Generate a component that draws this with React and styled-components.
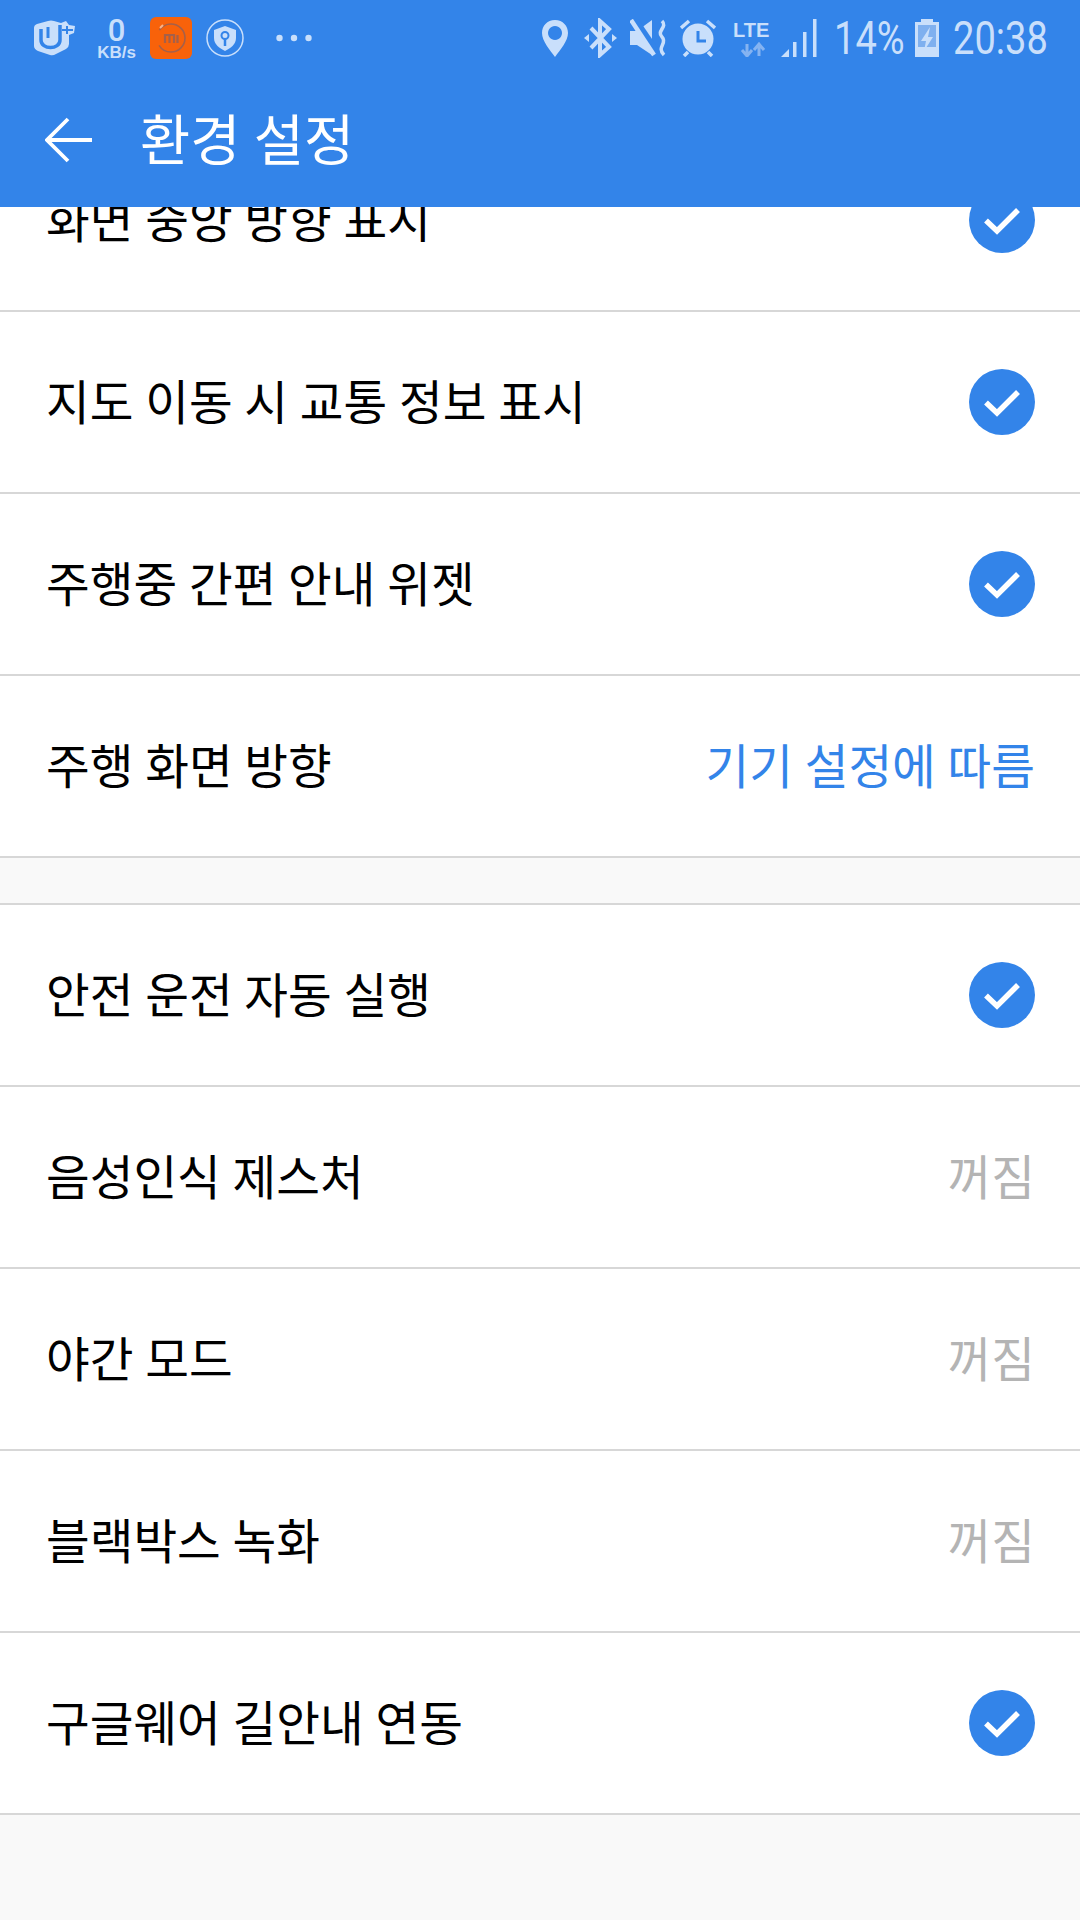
import React from 'react';
import styled, { createGlobalStyle } from 'styled-components';

const BLUE = '#3384e9';
const TINT = '#c9dffb';
const FONT = `Roboto, "Noto Sans CJK KR", sans-serif`;

const GlobalStyle = createGlobalStyle`
  html, body {
    margin: 0;
    padding: 0;
    background: #f9f9f9;
  }
`;

const Screen = styled.div`
  width: 1080px;
  height: 1920px;
  overflow: hidden;
  display: flex;
  flex-direction: column;
  background: #f9f9f9;
  font-family: ${FONT};
`;

const Header = styled.header`
  flex: none;
  height: 207px;
  background: ${BLUE};
  position: relative;
  z-index: 1;
`;

const StatusBar = styled.div`
  height: 76px;
  padding: 0 32px 0 33px;
  display: flex;
  align-items: center;
  justify-content: space-between;
  color: ${TINT};
`;

const StatusGroup = styled.div`
  display: flex;
  align-items: center;
`;

const Speed = styled.div`
  width: 41px;
  margin: 0 0 0 21px;
  display: flex;
  flex-direction: column;
  align-items: center;
  font-family: "Liberation Sans", sans-serif;
  font-weight: 700;
  font-size: 17px;
  line-height: 15px;
  white-space: nowrap;
  & > b {
    font-family: Roboto, sans-serif;
    font-weight: 500;
    font-size: 31px;
    line-height: 28px;
  }
`;

const StatusText = styled.span`
  display: block;
  width: ${(p) => p.$w}px;
  margin-left: ${(p) => p.$m}px;
  font-family: Roboto, sans-serif;
  font-size: 47px;
  line-height: 46px;
  white-space: nowrap;
  transform: scaleX(0.81);
  transform-origin: left center;
`;

const TitleBar = styled.div`
  height: 131px;
  padding: 0 0 3px 45px;
  box-sizing: border-box;
  display: flex;
  align-items: center;
  color: #fff;
`;

const Title = styled.h1`
  margin: 0 0 8px 48px;
  font-size: 54.5px;
  font-weight: 400;
`;

const List = styled.main`
  margin-top: -77px;
`;

const Group = styled.section`
  background: #fff;
  border-top: ${(p) => (p.$ruled ? '2px solid #d7d7d7' : 'none')};
  margin-bottom: 45px;
`;

const Row = styled.div`
  height: 180px;
  padding: 0 45px 0 46px;
  display: flex;
  align-items: center;
  justify-content: space-between;
  border-bottom: 2px solid #d7d7d7;
`;

const Label = styled.span`
  font-size: 47.5px;
  color: #000;
  margin-bottom: 5px;
`;

const Value = styled.span`
  font-size: 47.5px;
  color: ${(p) => (p.$on ? '#3384e9' : '#b4b4b4')};
  margin-bottom: 5px;
`;

const Icon = styled.svg`
  flex: none;
  display: block;
  margin: ${(p) => p.$m || '0'};
`;

const Check = () => (
  <svg width="66" height="66" viewBox="0 0 66 66">
    <circle cx="33" cy="33" r="33" fill={BLUE} />
    <path d="M17 33.5 L28 44 L49 23" fill="none" stroke="#fff" strokeWidth="5.5" />
  </svg>
);

const Uplus = () => (
  <Icon width="42" height="36" viewBox="0 0 42 36">
    <path d="M1 8 Q1 5 4 4 L15 1 Q18 0 21 1 L28 3 L33 1 L36 5 L42 6 L41 13 L36 15 V24 Q36 27 33 29 L23 34 Q20 36 17 35 L5 31 Q1 29 1 26 Z" fill={TINT} />
    <path d="M8 9 V20 C8 30 27 30 27 20 V5" fill="none" stroke={BLUE} strokeWidth="3.5" />
    <path d="M15 7 V18" stroke={BLUE} strokeWidth="3" />
    <path d="M34 6 V14 M29 10 H40" stroke={BLUE} strokeWidth="2" />
  </Icon>
);

const MiBadge = () => (
  <Icon width="42" height="42" viewBox="0 0 42 42" $m="0 0 0 13px">
    <rect width="42" height="42" rx="6" fill="#f8620a" />
    <circle cx="21" cy="21" r="14" fill="none" stroke="#a5604a" strokeWidth="1.6" strokeDasharray="72 16" strokeDashoffset="-52" />
    <path d="M10 11 L13 8" stroke="#fbb48a" strokeWidth="2" />
    <path d="M15 26 V18 H24 V26 M19.5 18 V26 M27.5 18 V26" fill="none" stroke="#a5604a" strokeWidth="2.2" />
  </Icon>
);

const Shield = () => (
  <Icon width="38" height="38" viewBox="0 0 38 38" $m="0 0 0 14px">
    <circle cx="19" cy="19" r="18" fill="none" stroke={TINT} strokeWidth="1.5" />
    <path d="M19 7 L30 11 V19 C30 25 25 29 19 32 C13 29 8 25 8 19 V11 Z" fill={TINT} />
    <circle cx="19" cy="16.5" r="3.5" fill="none" stroke={BLUE} strokeWidth="2" />
    <path d="M19 20 V27" stroke={BLUE} strokeWidth="2.5" />
  </Icon>
);

const Dots = () => (
  <Icon width="36" height="8" viewBox="0 0 36 8" $m="0 0 0 32px">
    <circle cx="3.5" cy="4" r="3.2" fill={TINT} />
    <circle cx="18" cy="4" r="3.2" fill={TINT} />
    <circle cx="32.5" cy="4" r="3.2" fill={TINT} />
  </Icon>
);

const Pin = () => (
  <Icon width="26" height="37" viewBox="0 0 26 37">
    <path fillRule="evenodd" d="M13 0 C21 0 26 6 26 13 C26 21 18 30 13 37 C8 30 0 21 0 13 C0 6 5 0 13 0 Z M13 6 A7 7 0 1 0 13.01 6 Z" fill={TINT} />
  </Icon>
);

const Bluetooth = () => (
  <Icon width="33" height="40" viewBox="0 0 33 40" $m="0 0 0 16px">
    <path d="M7 10 L25 29 L16 37 V3 L25 11 L7 30" fill="none" stroke={TINT} strokeWidth="4" />
    <path d="M0 20 L5 16 V24 Z M33 20 L28 16 V24 Z" fill={TINT} />
  </Icon>
);

const Mute = () => (
  <Icon width="38" height="38" viewBox="0 0 38 38" $m="0 0 0 13px">
    <path d="M0 12 H7 L22 1 V36 L7 26 H0 Z" fill={TINT} />
    <path d="M3 -1 L26 33" stroke={BLUE} strokeWidth="8" />
    <path d="M1 1 L24 36" stroke={TINT} strokeWidth="4.5" />
    <path d="M32 2 C38 8 26 12 32 18 C38 24 26 28 34 36" fill="none" stroke={TINT} strokeWidth="3.5" />
  </Icon>
);

const Alarm = () => (
  <Icon width="36" height="38" viewBox="0 0 36 38" $m="0 0 0 12px">
    <circle cx="18" cy="20" r="15.5" fill={TINT} />
    <path d="M18 12 V22 H26" fill="none" stroke={BLUE} strokeWidth="3" />
    <path d="M1 9 L9 2 M35 9 L27 2 M4 37 L8 33 M32 37 L28 33" stroke={TINT} strokeWidth="3.5" />
  </Icon>
);

const Lte = () => (
  <Icon width="38" height="38" viewBox="0 0 38 38" $m="0 0 0 17px">
    <text x="0" y="18" fontFamily="Liberation Sans, sans-serif" fontWeight="700" fontSize="20" fill={TINT}>LTE</text>
    <path d="M14 25 V35 M9 31 L14 37 L19 31" fill="none" stroke="#85b3f1" strokeWidth="3" />
    <path d="M26 37 V27 M21 31 L26 25 L31 31" fill="none" stroke="#85b3f1" strokeWidth="3" />
  </Icon>
);

const Signal = () => (
  <Icon width="36" height="38" viewBox="0 0 36 38" $m="0 0 0 10px">
    <path d="M0 38 L8 30 V38 Z" fill={TINT} />
    <rect x="12" y="23" width="3.5" height="15" fill={TINT} />
    <rect x="22" y="13" width="3.5" height="25" fill={TINT} />
    <rect x="32" y="0" width="3.5" height="38" fill={TINT} />
  </Icon>
);

const Battery = () => (
  <Icon width="24" height="38" viewBox="0 0 24 38" $m="0 0 0 13px">
    <path d="M6 0 H18 V3 H24 V38 H0 V3 H6 Z" fill={TINT} />
    <rect x="3" y="6" width="18" height="22" fill="#7fb0ef" />
    <path d="M15 8 L6 22 H11 L9 32 L18 18 H13 Z" fill={TINT} />
  </Icon>
);

const Back = () => (
  <svg width="47" height="46" viewBox="0 0 47 46">
    <path d="M23 2 L2 23 L23 44 M2 23 H47" fill="none" stroke="#fff" strokeWidth="3.8" />
  </svg>
);

const SettingRow = ({ label, value, on }) => (
  <Row>
    <Label>{label}</Label>
    {value ? <Value $on={on}>{value}</Value> : <Check />}
  </Row>
);

export default function App() {
  return (
    <Screen>
      <GlobalStyle />
      <Header>
        <StatusBar>
          <StatusGroup>
            <Uplus />
            <Speed>
              <b>0</b>
              KB/s
            </Speed>
            <MiBadge />
            <Shield />
            <Dots />
          </StatusGroup>
          <StatusGroup>
            <Pin />
            <Bluetooth />
            <Mute />
            <Alarm />
            <Lte />
            <Signal />
            <StatusText $w={68} $m={17}>14%</StatusText>
            <Battery />
            <StatusText $w={95} $m={14}>20:38</StatusText>
          </StatusGroup>
        </StatusBar>
        <TitleBar>
          <Back />
          <Title>환경 설정</Title>
        </TitleBar>
      </Header>
      <List>
        <Group>
          <SettingRow label="화면 중앙 방향 표시" />
          <SettingRow label="지도 이동 시 교통 정보 표시" />
          <SettingRow label="주행중 간편 안내 위젯" />
          <SettingRow label="주행 화면 방향" value="기기 설정에 따름" on />
        </Group>
        <Group $ruled>
          <SettingRow label="안전 운전 자동 실행" />
          <SettingRow label="음성인식 제스처" value="꺼짐" />
          <SettingRow label="야간 모드" value="꺼짐" />
          <SettingRow label="블랙박스 녹화" value="꺼짐" />
          <SettingRow label="구글웨어 길안내 연동" />
        </Group>
      </List>
    </Screen>
  );
}
